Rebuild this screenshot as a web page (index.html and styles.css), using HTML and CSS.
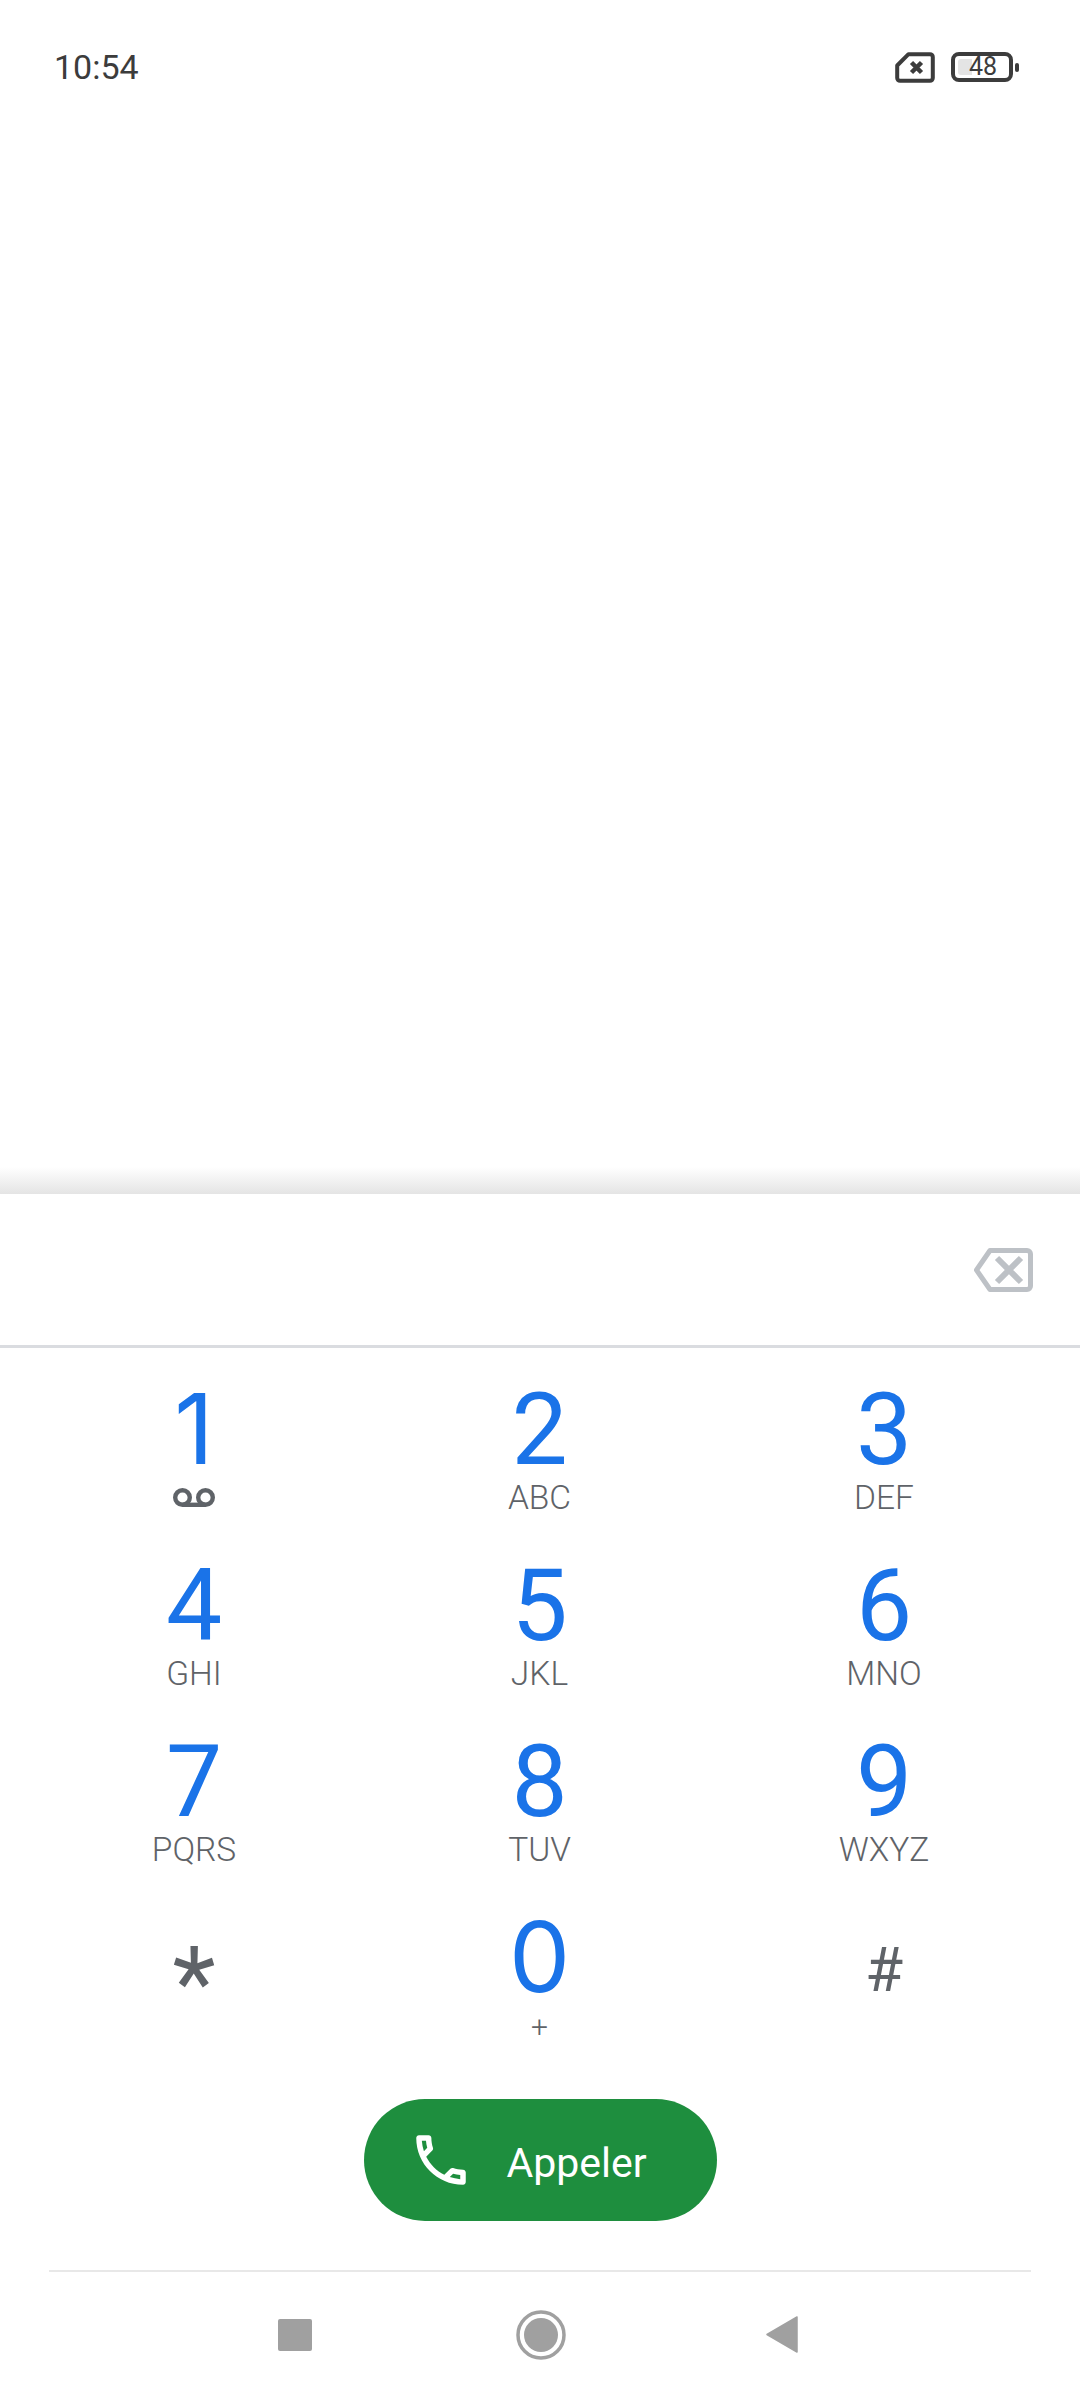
FILE: index.html
```html
<!DOCTYPE html>
<html lang="fr">
<head>
<meta charset="utf-8">
<title>Téléphone</title>
<link rel="stylesheet" href="styles.css">
</head>
<body>
<div class="screen">
  <header class="status">
    <span class="time">10:54</span>
    <div class="status-icons">
      <svg class="sim" viewBox="0 0 40 31"><path d="M13.500 2.200H35a2.800 2.800 0 0 1 2.800 2.800v21a2.800 2.800 0 0 1-2.800 2.800H5A2.800 2.800 0 0 1 2.200 26V13.500z" fill="none" stroke="#3c3c3c" stroke-width="4" stroke-linejoin="round"/><path d="M16.500 10.500l10 10M26.500 10.500l-10 10" stroke="#3c3c3c" stroke-width="4.500" fill="none"/></svg>
      <div class="battery">
        <div class="battery-body"><span class="battery-fill"></span><span class="battery-level">48</span></div>
        <span class="battery-nub"></span>
      </div>
    </div>
  </header>
  <div class="log"><div class="shade"></div></div>
  <div class="number-field">
    <svg class="backspace" viewBox="0 0 60 44"><path d="M17 2.500H54a3.500 3.500 0 0 1 3.500 3.500v32a3.500 3.500 0 0 1-3.500 3.500H17L3.500 22z" fill="none" stroke="#bdc1c6" stroke-width="5" stroke-linejoin="round"/><path d="M24 10l24 24M48 10L24 34" stroke="#bdc1c6" stroke-width="6" fill="none"/></svg>
  </div>
  <main class="keypad">
    <div class="key"><span class="digit alt">1</span>
      <svg class="voicemail" viewBox="0 0 42 19"><circle cx="9.500" cy="9.500" r="7.300" fill="none" stroke="#5f6368" stroke-width="4.400"/><circle cx="32.500" cy="9.500" r="7.300" fill="none" stroke="#5f6368" stroke-width="4.400"/><path d="M9.500 16.800h23" stroke="#5f6368" stroke-width="4.400"/></svg>
    </div>
    <div class="key"><span class="digit">2</span><span class="letters">ABC</span></div>
    <div class="key"><span class="digit">3</span><span class="letters">DEF</span></div>
    <div class="key"><span class="digit">4</span><span class="letters">GHI</span></div>
    <div class="key"><span class="digit">5</span><span class="letters">JKL</span></div>
    <div class="key"><span class="digit">6</span><span class="letters">MNO</span></div>
    <div class="key"><span class="digit">7</span><span class="letters">PQRS</span></div>
    <div class="key"><span class="digit">8</span><span class="letters">TUV</span></div>
    <div class="key"><span class="digit">9</span><span class="letters">WXYZ</span></div>
    <div class="key"><span class="digit symbol star">*</span></div>
    <div class="key"><span class="digit alt">0</span><span class="letters plus">+</span></div>
    <div class="key"><span class="digit symbol hash">#</span></div>
  </main>
  <button class="call">
    <svg class="call-icon" viewBox="0 0 24 24"><path fill="#fff" d="M6.540 5c.06.89.21 1.760.45 2.590l-1.200 1.200c-.41-1.200-.67-2.470-.76-3.790h1.510m9.860 12.020c.85.24 1.720.39 2.600.45v1.490c-1.320-.09-2.590-.35-3.800-.75l1.200-1.190M7.500 3H4c-.55 0-1 .45-1 1 0 9.390 7.610 17 17 17 .55 0 1-.45 1-1v-3.490c0-.55-.45-1-1-1-1.240 0-2.450-.2-3.570-.57-.1-.04-.21-.05-.31-.05-.26 0-.51.1-.71.29l-2.200 2.200c-2.830-1.450-5.150-3.760-6.590-6.590l2.200-2.200c.28-.28.36-.67.25-1.020C8.700 6.450 8.500 5.250 8.500 4c0-.55-.45-1-1-1z"/></svg>
    <span class="call-label">Appeler</span>
  </button>
  <div class="nav-rule"></div>
  <nav class="nav">
    <span class="nav-square"></span>
    <svg class="nav-home" viewBox="0 0 50 50"><circle cx="25" cy="25" r="23" fill="none" stroke="#a0a0a0" stroke-width="3.500"/><circle cx="25" cy="25" r="17" fill="#a0a0a0"/></svg>
    <svg class="nav-back" viewBox="0 0 32 37"><path d="M31 1v35L1 18.500z" fill="#a0a0a0" stroke="#a0a0a0" stroke-width="1.500" stroke-linejoin="round"/></svg>
  </nav>
</div>
</body>
</html>
```
FILE: styles.css
```css
* { box-sizing: border-box; }
html, body { margin: 0; padding: 0; background: #fff; }
body { font-family: Roboto, "Liberation Sans", sans-serif; }
.screen { width: 1080px; height: 2400px; display: flex; flex-direction: column; overflow: hidden; }

.status { height: 134px; flex: none; display: flex; justify-content: space-between; align-items: center; padding: 0 61px 0 54px; }
.time { font-size: 34px; font-weight: 450; color: #3c3c3c; }
.status-icons { display: flex; align-items: center; gap: 16px; }
.sim { width: 40px; height: 31px; display: block; }
.battery { display: flex; align-items: center; gap: 2px; }
.battery-body { width: 62px; height: 30px; border: 4px solid #3c3c3c; border-radius: 8px; display: flex; align-items: center; justify-content: center; padding-left: 2px; position: relative; }
.battery-fill { position: absolute; left: 3px; top: 3px; bottom: 3px; width: 14px; background: #e4e4e4; border-radius: 3px 0 0 3px; }
.battery-level { position: relative; font-size: 25px; line-height: 24px; color: #3c3c3c; }
.battery-nub { width: 4px; height: 9px; background: #3c3c3c; border-radius: 2px; }

.log { flex: 1; display: flex; flex-direction: column; justify-content: flex-end; }
.shade { height: 27px; background: linear-gradient(to bottom, #fff, #e4e4e4); }

.number-field { height: 154px; flex: none; border-bottom: 3px solid #dadce0; display: flex; align-items: center; justify-content: flex-end; padding: 0 47px 0 0; }
.backspace { width: 60px; height: 44px; display: block; }

.keypad { flex: none; display: grid; grid-template-columns: 346px 345px 344px; grid-auto-rows: 176px; padding: 0 21px; }
.key { display: flex; flex-direction: column; align-items: center; padding-top: 32px; }
.digit { font-size: 100px; line-height: 100px; color: #1a73e8; }
.alt { font-family: Inter, sans-serif; font-size: 97px; margin-top: -1px; }
.letters { font-size: 33.500px; font-weight: 300; line-height: 36px; color: #5f6368; }
.plus { font-size: 30px; margin-top: 2px; }
.voicemail { width: 42px; height: 19px; display: block; margin-top: 9px; }
.symbol { color: #5f6368; }
.star { padding-top: 25px; }
.hash { font-size: 62px; line-height: 62px; padding-top: 31px; }

.call { flex: none; align-self: center; margin: 47px 0 49px; width: 353px; height: 122px; border: 0; border-radius: 61px; background: #1e8e3e; display: flex; align-items: center; gap: 33px; padding: 0 0 0 44px; font-family: inherit; }
.call-icon { width: 66px; height: 66px; display: block; }
.call-label { font-size: 41px; font-weight: 420; color: #fff; padding-top: 5px; }

.nav-rule { height: 2px; flex: none; margin: 0 49px; background: #e8e8e8; }
.nav { flex: none; height: 128px; display: flex; align-items: center; justify-content: center; padding: 0 4px 3px 0; }
.nav-square { width: 34px; height: 32px; background: #a0a0a0; border-radius: 2px; }
.nav-home { width: 50px; height: 50px; display: block; margin: 0 200px 0 204px; }
.nav-back { width: 32px; height: 37px; display: block; }
```
